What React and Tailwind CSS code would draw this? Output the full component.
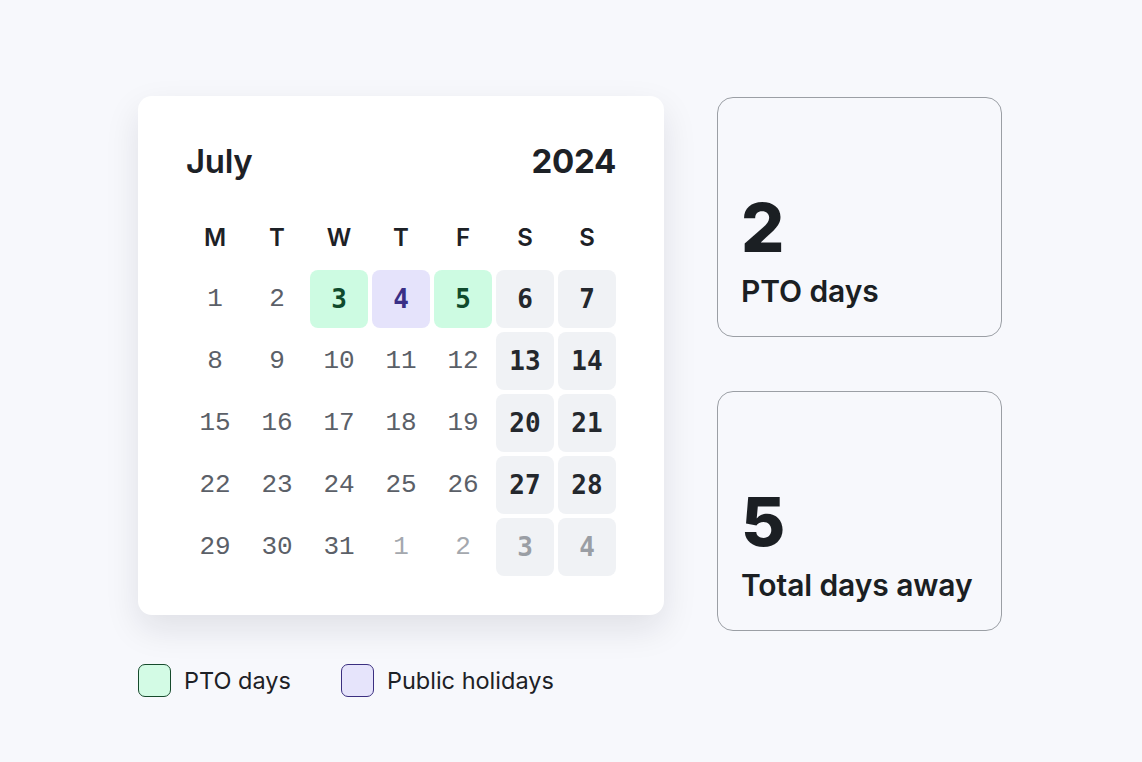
const weeks = [
  [
    { d: 1, t: "day" },
    { d: 2, t: "day" },
    { d: 3, t: "pto" },
    { d: 4, t: "holiday" },
    { d: 5, t: "pto" },
    { d: 6, t: "weekend" },
    { d: 7, t: "weekend" },
  ],
  [8, 9, 10, 11, 12].map((d) => ({ d, t: "day" })).concat([
    { d: 13, t: "weekend" },
    { d: 14, t: "weekend" },
  ]),
  [15, 16, 17, 18, 19].map((d) => ({ d, t: "day" })).concat([
    { d: 20, t: "weekend" },
    { d: 21, t: "weekend" },
  ]),
  [22, 23, 24, 25, 26].map((d) => ({ d, t: "day" })).concat([
    { d: 27, t: "weekend" },
    { d: 28, t: "weekend" },
  ]),
  [
    { d: 29, t: "day" },
    { d: 30, t: "day" },
    { d: 31, t: "day" },
    { d: 1, t: "muted" },
    { d: 2, t: "muted" },
    { d: 3, t: "mutedWeekend" },
    { d: 4, t: "mutedWeekend" },
  ],
];

const weekdays = ["M", "T", "W", "T", "F", "S", "S"];

// estilos por tipo de dia
const cellStyles = {
  day: "text-[#5b6068] font-['Liberation_Mono',monospace]",
  muted: "text-[#a4a8ae] font-['Liberation_Mono',monospace]",
  pto: "bg-[#cdfbe2] text-[#0f4a2c] font-bold font-['DejaVu_Sans_Mono',monospace]",
  holiday: "bg-[#e5e3fb] text-[#3a2f86] font-bold font-['DejaVu_Sans_Mono',monospace]",
  weekend: "bg-[#f0f2f5] text-[#24282d] font-bold font-['DejaVu_Sans_Mono',monospace]",
  mutedWeekend: "bg-[#f0f2f5] text-[#9a9ea4] font-bold font-['DejaVu_Sans_Mono',monospace]",
};

function StatCard({ value, label }) {
  return (
    <div className="w-[285px] h-[240px] rounded-[16px] border-[1.5px] border-[#9b9fa5] flex flex-col justify-end pl-[23px] pb-[27px]">
      <div className="text-[68px] leading-[68px] font-extrabold text-[#1b1f23] tracking-tight">
        {value}
      </div>
      <div className="mt-[12px] whitespace-nowrap text-[30px] leading-[36px] font-semibold text-[#1b1f23] tracking-[-0.1px]">
        {label}
      </div>
    </div>
  );
}

export default function App() {
  return (
    <div className="min-h-screen w-full bg-[#f7f8fc] font-['Inter',sans-serif] pt-[96px] pl-[138px]">
      <div className="flex gap-[53px]">
        <div className="flex flex-col">
          <div className="w-[526px] bg-white rounded-[14px] shadow-[0_14px_34px_rgba(20,24,40,0.10)] px-[48px] pt-[46px] pb-[39px]">
            <div className="flex justify-between items-center h-[40px] text-[33px] font-semibold text-[#1d2126] tracking-[-0.3px]">
              <span>July</span>
              <span className="font-bold">2024</span>
            </div>
            <div className="grid grid-cols-7 gap-[4px] mt-[41px]">
              {weekdays.map((w, i) => (
                <div
                  key={i}
                  className="h-[30px] flex items-center justify-center text-[24px] font-semibold text-[#1d2126]"
                >
                  {w}
                </div>
              ))}
            </div>
            <div className="grid grid-cols-7 gap-[4px] mt-[17px]">
              {weeks.flat().map((c, i) => (
                <div
                  key={i}
                  className={
                    "h-[58px] rounded-[8px] flex items-center justify-center text-[26px] " +
                    cellStyles[c.t]
                  }
                >
                  {c.d}
                </div>
              ))}
            </div>
          </div>
          <div className="flex items-center mt-[48px] text-[23.5px] text-[#1d2126]">
            <span className="w-[33px] h-[33px] rounded-[7px] border-[1.5px] border-[#164a2c] bg-[#d3fbe5]" />
            <span className="ml-[13px]">PTO days</span>
            <span className="ml-[50px] w-[33px] h-[33px] rounded-[7px] border-[1.5px] border-[#3b2f80] bg-[#e6e4fb]" />
            <span className="ml-[13px]">Public holidays</span>
          </div>
        </div>
        <div className="flex flex-col gap-[54px] pt-[1px]">
          <StatCard value="2" label="PTO days" />
          <StatCard value="5" label="Total days away" />
        </div>
      </div>
    </div>
  );
}
